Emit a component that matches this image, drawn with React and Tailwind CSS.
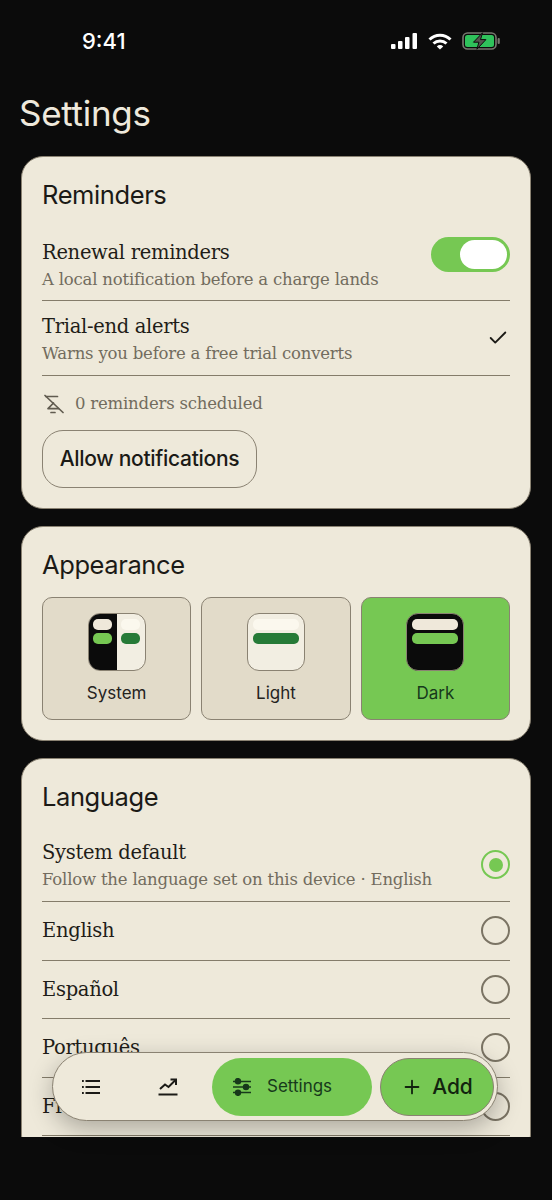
import React from "react";
import { Check, Plus } from "lucide-react";

const head = "font-['Inter',sans-serif]";
const serif = "font-['DejaVu_Serif',serif]";

function Card({ title, children, className = "" }) {
  return (
    <section className={`rounded-[22px] border border-[#8a8272] bg-[#eee9da] px-5 pt-5 ${className}`}>
      <h2 className={`${head} h-9 text-[25.5px] leading-9 font-normal tracking-[-0.4px] text-[#1b1a16]`}>{title}</h2>
      {children}
    </section>
  );
}

function Row({ title, sub, h, textClass = "", children }) {
  return (
    <div className={`flex items-center justify-between border-b border-[#847c6a] ${h}`}>
      <div className={`${serif} ${textClass}`}>
        <div className="text-[19.5px] leading-[27px] tracking-[-0.3px] text-[#1f1d18]">{title}</div>
        {sub && <div className="text-[16.5px] leading-[27px] tracking-[-0.2px] text-[#726c5e]">{sub}</div>}
      </div>
      {children}
    </div>
  );
}

function Radio({ on }) {
  return (
    <span className={`flex h-[29px] w-[29px] items-center justify-center rounded-full border-[2px] ${on ? "border-[#76c853]" : "border-[#7b7464]"}`}>
      {on && <span className="h-[14px] w-[14px] rounded-full bg-[#76c853]" />}
    </span>
  );
}

function Tile({ label, active, children }) {
  return (
    <div className={`flex flex-1 flex-col items-center rounded-[10px] border border-[#8a8272] pt-[15px] ${active ? "bg-[#76c853]" : "bg-[#e2dbc9]"}`}>
      {children}
      <span className={`${head} mt-[10px] text-[17px] leading-6 ${active ? "text-[#17391b]" : "text-[#25231e]"}`}>{label}</span>
    </div>
  );
}

function Signal() {
  return (
    <svg width="27" height="16" viewBox="0 0 27 16" fill="#fff">
      <rect x="0" y="11" width="4.5" height="5" rx="1" />
      <rect x="7" y="8" width="4.5" height="8" rx="1" />
      <rect x="14" y="4" width="4.5" height="12" rx="1" />
      <rect x="21.5" y="0" width="4.5" height="16" rx="1" />
    </svg>
  );
}
function Wifi() {
  return (
    <svg width="24" height="17" viewBox="0 0 24 17" fill="none" stroke="#fff" strokeWidth="3">
      <path d="M1.5 6.5a15 15 0 0 1 21 0" />
      <path d="M5.5 10.5a9.5 9.5 0 0 1 13 0" />
      <path d="M12 16.5 8.8 13.4a4.6 4.6 0 0 1 6.4 0Z" fill="#fff" stroke="none" />
    </svg>
  );
}
function Battery() {
  return (
    <svg width="39" height="18" viewBox="0 0 39 18">
      <rect x="1" y="1" width="33" height="16" rx="4.5" fill="none" stroke="#77786f" strokeWidth="1.6" />
      <rect x="3" y="3" width="29" height="12" rx="2.5" fill="#2fc25b" />
      <rect x="35.6" y="6" width="2.2" height="6" rx="1" fill="#77786f" />
      <path d="M20.5 0.8 11.5 10.2h5.4l-2 7 9-9.6h-5.4Z" fill="#55554f" stroke="#0b0b0b" strokeWidth="1" />
    </svg>
  );
}

function Thumb({ children, className = "" }) {
  return <div className={`relative h-[58px] w-[58px] overflow-hidden rounded-[12px] border border-[#8a8272] ${className}`}>{children}</div>;
}
function Pills({ top, bottom, w }) {
  return (
    <div className="flex flex-col items-center gap-[3px] pt-[5px]">
      <span className={`h-[11px] rounded-[5px] ${w} ${top}`} />
      <span className={`h-[11px] rounded-[5px] ${w} ${bottom}`} />
    </div>
  );
}

function Muted() {
  return (
    <svg width="20" height="20" viewBox="0 0 20 20" fill="none" stroke="#615c50" strokeWidth="1.7" strokeLinecap="round" strokeLinejoin="round" className="ml-[2px]">
      <path d="M1 1.5 19 18.5" />
      <path d="M2 2.5h11.5" />
      <path d="M9.5 9 4 14.7h10.5" />
      <path d="M7 18.5h4" />
    </svg>
  );
}
function ListIcon() {
  return (
    <svg width="18" height="14" viewBox="0 0 18 14" fill="none" stroke="#1b1a16" strokeWidth="2">
      <path d="M3.5 1h14.5M3.5 7h14.5M3.5 13h14.5" />
      <path d="M0 1h1.8M0 7h1.8M0 13h1.8" />
    </svg>
  );
}
function Trend() {
  return (
    <svg width="20" height="18" viewBox="0 0 20 18" fill="none" stroke="#1b1a16" strokeWidth="2">
      <path d="M2 11 7 6.5l3.5 2.5L17.5 2" />
      <path d="M12.5 1.5h5.5V7" />
      <path d="M0.5 16.5h19" />
    </svg>
  );
}
function Sliders() {
  return (
    <svg width="20" height="18" viewBox="0 0 20 18" fill="#17391b" stroke="#17391b" strokeWidth="1.7">
      <path d="M1 3.5h18M1 9h18M1 14.5h18" />
      <circle cx="6" cy="3.2" r="2.4" />
      <circle cx="14" cy="9" r="2.4" />
      <circle cx="6" cy="14.8" r="2.4" />
    </svg>
  );
}

export default function App() {
  return (
    <div className="relative h-[1200px] w-[552px] overflow-hidden bg-[#0b0b0b]">
      <header className="flex h-[82px] items-center justify-between pr-[51px] pl-[82px]">
        <span className="font-['Inter',sans-serif] text-[22px] font-medium text-white">9:41</span>
        <div className="flex items-center gap-[10px]">
          <Signal />
          <Wifi />
          <Battery />
        </div>
      </header>
      <h1 className={`${head} mb-3 h-[62px] pl-[19px] text-[35px] leading-[62px] font-normal tracking-[-0.3px] text-[#efe9dc]`}>Settings</h1>

      <main className="flex h-[981px] flex-col gap-[17px] overflow-hidden px-[21px]">
        <Card title="Reminders" className="shrink-0">
          <div className="mt-[13px]">
            <Row title="Renewal reminders" sub="A local notification before a charge lands" h="h-[75px]" textClass="pt-[6px]">
              <span className="mt-[-17px] flex h-[35px] w-[79px] items-center justify-end rounded-full bg-[#76c853] pr-[3px]">
                <span className="h-[29px] w-[47px] rounded-full bg-white" />
              </span>
            </Row>
            <Row title="Trial-end alerts" sub="Warns you before a free trial converts" h="h-[75px]" textClass="pt-[4px]">
              <Check size={22} strokeWidth={2} className="mr-[1px] text-[#1b1a16]" />
            </Row>
          </div>
          <div className={`${serif} flex h-[54px] items-center gap-[11px] pt-[2px] text-[16.5px] tracking-[-0.2px] text-[#726c5e]`}>
            <Muted />
            0 reminders scheduled
          </div>
          <button className={`${head} mb-5 h-[58px] w-[215px] rounded-[21px] border border-[#8a8272] text-[21px] font-[550] tracking-[-0.3px] text-[#1b1a16]`}>Allow notifications</button>
        </Card>

        <Card title="Appearance" className="shrink-0 pb-5">
          <div className="mt-[14px] flex h-[123px] gap-[10px]">
            <Tile label="System">
              <Thumb className="flex bg-[#f2eee2]">
                <div className="h-full w-1/2 bg-[#0b0b0b]"><Pills w="w-[19px]" top="bg-[#efe8da]" bottom="bg-[#76c853]" /></div>
                <div className="h-full w-1/2"><Pills w="w-[19px]" top="bg-[#fbf8ee]" bottom="bg-[#267a37]" /></div>
              </Thumb>
            </Tile>
            <Tile label="Light">
              <Thumb className="bg-[#f2eee2]"><Pills w="w-[46px]" top="bg-[#fbf8ee]" bottom="bg-[#267a37]" /></Thumb>
            </Tile>
            <Tile label="Dark" active>
              <Thumb className="bg-[#0b0b0b]"><Pills w="w-[46px]" top="bg-[#efe8da]" bottom="bg-[#76c853]" /></Thumb>
            </Tile>
          </div>
        </Card>

        <Card title="Language" className="shrink-0 pb-5">
          <div className="mt-[13px]">
            <Row title="System default" sub="Follow the language set on this device · English" h="h-[74px]" textClass="pt-[3px]"><Radio on /></Row>
            <Row title="English" h="h-[58.5px]"><Radio /></Row>
            <Row title="Español" h="h-[58.5px]"><Radio /></Row>
            <Row title="Português" h="h-[58.5px]"><Radio /></Row>
            <Row title="Français" h="h-[58.5px]"><Radio /></Row>
          </div>
        </Card>
      </main>

      <nav className="absolute top-[1052px] left-[52px] flex h-[69px] w-[446px] items-center rounded-full border border-[#8a8272] bg-[#eee9da] pr-[3px] pl-[5px] shadow-[0_8px_24px_rgba(0,0,0,0.28)]">
        <span className="flex w-[66px] justify-center"><ListIcon /></span>
        <span className="flex w-[88px] justify-center"><Trend /></span>
        <span className="flex h-[58px] w-[160px] items-center justify-start gap-[15px] rounded-full bg-[#76c853] pl-[20px]">
          <Sliders />
          <span className={`${head} text-[17px] text-[#17391b]`}>Settings</span>
        </span>
        <button className={`${head} ml-2 flex h-[58px] w-[114px] items-center justify-center gap-[9px] rounded-full border border-[#8a8272] bg-[#76c853] text-[21px] font-medium text-[#12240f]`}>
          <Plus size={22} strokeWidth={2} />
          Add
        </button>
      </nav>
    </div>
  );
}
